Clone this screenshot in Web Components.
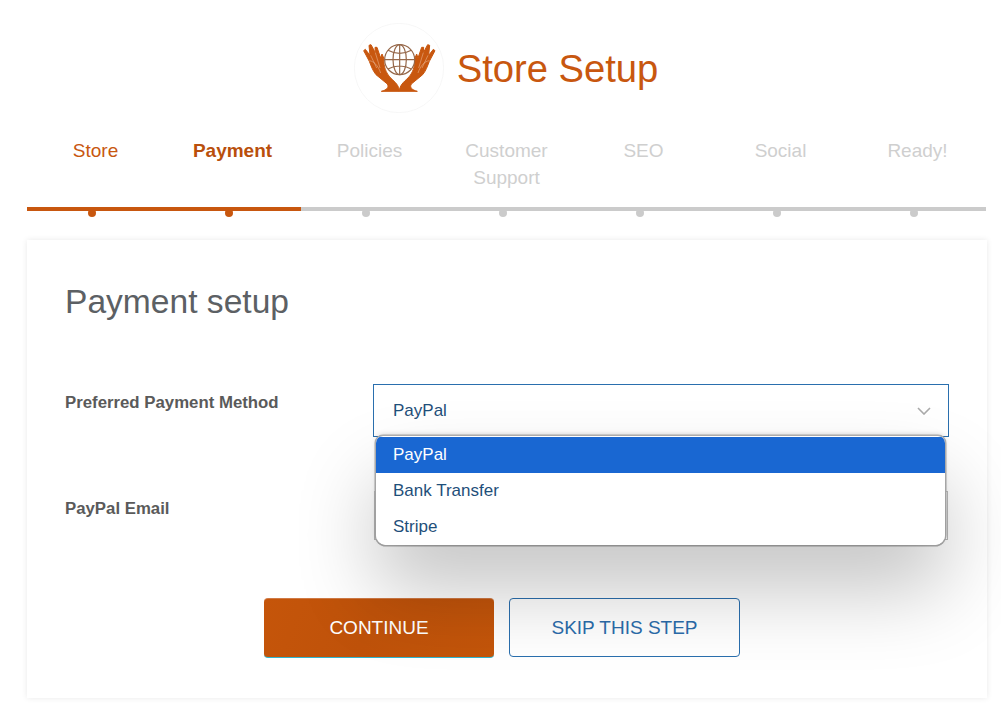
<!DOCTYPE html>
<html>
<head>
<meta charset="utf-8">
<title>Store Setup</title>
<style>
  html, body { margin: 0; padding: 0; background: #fff; }
  body { font-family: "Liberation Sans", Arial, sans-serif; }
</style>
</head>
<body>
<store-setup></store-setup>

<script>
class StoreLogo extends HTMLElement {
  constructor() {
    super();
    this.shadowDOM = this.attachShadow({mode: 'open'});
  }

  connectedCallback() {
    this.shadowDOM.innerHTML = `
    <style>
      :host { display: block; width: 90px; height: 90px; }
      svg { display: block; }
    </style>
    <svg width="90" height="90" viewBox="12 15 270 270" xmlns="http://www.w3.org/2000/svg">
      <circle cx="147" cy="150" r="134" fill="#fff" stroke="#f3f3f3" stroke-width="2"/>
      <defs>
        <g id="hand">
          <path fill="#c8570f" stroke="#c8570f" stroke-width="3" stroke-linejoin="round" d="M148 220 L94 220 C110 216 118 208 112 198 L78 170 C68 158 64 145 58 130 L41 98 L46 94 L60 112 L57 82 L63 80 L76 104 L75 88 L81 88 L92 120 L96 108 L102 122 C100 145 108 165 122 180 C136 193 147 202 148 220 Z"/>
          <path fill="none" stroke="#f0c9ac" stroke-width="1.4" d="M58 128 C72 130 84 142 92 165 M76 104 L90 150 M62 112 L80 150"/>
        </g>
      </defs>
      <use href="#hand"/>
      <use href="#hand" transform="translate(296 0) scale(-1 1)"/>
      <g fill="none" stroke="#96684a" stroke-width="3.6">
        <circle cx="149" cy="125" r="45"/>
        <ellipse cx="149" cy="125" rx="20" ry="45"/>
        <path d="M149 80 V170 M104 125 H194 M114 97 C135 109 163 109 184 97 M114 153 C135 141 163 141 184 153"/>
      </g>
    </svg>
    `;
  }
}

class SetupStep extends HTMLElement {
  constructor() {
    super();
    this.shadowDOM = this.attachShadow({mode: 'open'});
  }

  connectedCallback() {
    this.shadowDOM.innerHTML = `
    <style>
      :host {
        display: flex;
        flex-direction: column;
        justify-content: space-between;
        height: 74px;
        position: relative;
        color: #cfcfcf;
        --line: #cbcbcb;
      }
      :host([state="done"]) { color: #c8570f; --line: #c8570f; }
      :host([state="current"]) { color: #b94f0c; --line: #c8570f; font-weight: bold; }
      .name {
        font-size: 19px;
        line-height: 27px;
        text-align: center;
        padding: 0 20px;
      }
      .line { height: 4px; background: var(--line); }
      .dot {
        position: absolute;
        left: 61px;
        top: 72px;
        width: 8px;
        height: 8px;
        border-radius: 50%;
        background: var(--line);
      }
    </style>
    <div class="name"><slot></slot></div>
    <div class="line"></div>
    <div class="dot"></div>
    `;
  }
}

class PaymentSelect extends HTMLElement {
  constructor() {
    super();
    this.shadowDOM = this.attachShadow({mode: 'open'});
  }

  connectedCallback() {
    this.shadowDOM.innerHTML = `
    <style>
      :host { display: block; position: relative; color: #1f4f7a; font-size: 17px; }
      .box {
        box-sizing: border-box;
        height: 53px;
        border: 1px solid #2a6fae;
        display: flex;
        align-items: center;
        justify-content: space-between;
        padding: 0 17px 0 19px;
        background: #fff;
      }
      .menu {
        position: absolute;
        z-index: 2;
        left: 3px;
        right: 4px;
        top: 52px;
        background: #fff;
        border-radius: 7px 7px 10px 10px;
        overflow: hidden;
      }
      .shadow {
        position: absolute;
        z-index: 1;
        left: 3px;
        right: 4px;
        top: 52px;
        height: 109px;
        border-radius: 7px 7px 10px 10px;
        box-shadow: 0 45px 80px rgba(0, 0, 0, .23), 0 0 0 1.5px #b0b0b0, 0 -2px 5px rgba(0, 0, 0, .14);
      }
      .opt { height: 36px; line-height: 36px; padding-left: 17px; }
      .opt:first-child { margin-top: 1px; background: #1967d2; color: #fff; }
    </style>
    <div class="box">
      <span>PayPal</span>
      <svg width="14" height="8" viewBox="0 0 14 8"><path d="M1 1 L7 7 L13 1" fill="none" stroke="#aaa" stroke-width="1.6"/></svg>
    </div>
    <div class="shadow"></div>
    <div class="menu">
      <div class="opt">PayPal</div>
      <div class="opt">Bank Transfer</div>
      <div class="opt">Stripe</div>
    </div>
    `;
  }
}

class FormRow extends HTMLElement {
  constructor() {
    super();
    this.shadowDOM = this.attachShadow({mode: 'open'});
  }

  connectedCallback() {
    this.shadowDOM.innerHTML = `
    <style>
      :host { display: grid; grid-template-columns: 308px 576px; }
      .label {
        font-size: 16.8px;
        font-weight: bold;
        color: #5a5a5a;
        line-height: 18px;
        padding-top: 10px;
      }
    </style>
    <div class="label">${this.getAttribute('label')}</div>
    <div><slot></slot></div>
    `;
  }
}

class SetupButton extends HTMLElement {
  constructor() {
    super();
    this.shadowDOM = this.attachShadow({mode: 'open'});
  }

  connectedCallback() {
    this.shadowDOM.innerHTML = `
    <style>
      :host {
        display: flex;
        align-items: center;
        justify-content: center;
        box-sizing: border-box;
        width: 231px;
        height: 59px;
        border-radius: 4px;
        font-size: 19px;
        border: 1px solid #2a6fae;
        color: #2b6cab;
      }
      :host([primary]) {
        width: 230px;
        height: 60px;
        border: 0;
        border-top: 1px solid #d07a45;
        border-bottom: 1px solid #2fb6cf;
        color: #fff;
        background: linear-gradient(110deg, #c5550a 0%, #bf520a 45%, #c4550a 100%);
      }
    </style>
    <slot></slot>
    `;
  }
}

class StoreSetup extends HTMLElement {
  constructor() {
    super();
    this.shadowDOM = this.attachShadow({mode: 'open'});
  }

  connectedCallback() {
    this.shadowDOM.innerHTML = `
    <style>
      :host { display: block; font-family: "Liberation Sans", Arial, sans-serif; padding-bottom: 29px; }
      * { box-sizing: border-box; margin: 0; padding: 0; }
      header {
        display: flex;
        align-items: center;
        justify-content: center;
        gap: 13px;
        padding: 23px 0 0 0;
        height: 113px;
        margin-left: 11px;
      }
      h1 { font-size: 38.2px; font-weight: normal; color: #c8570f; line-height: 90px; padding-top: 1px; }
      .steps {
        display: grid;
        grid-template-columns: repeat(7, 137px);
        margin: 24px 0 0 27px;
        width: 959px;
      }
      .card {
        margin: 29px 0 0 27px;
        width: 960px;
        height: 458px;
        padding: 41px 38px 0;
        box-shadow: 0 0 6px rgba(0, 0, 0, .09);
      }
      h2 { font-size: 33.6px; font-weight: normal; color: #5c6064; line-height: 41px; }
      form-row { margin-top: 62px; }
      form-row + form-row { margin-top: 53px; }
      .field {
        height: 49px;
        border: 1px solid #bbb;
        margin: 1px 1px 4px;
      }
      .actions {
        display: flex;
        justify-content: center;
        gap: 15px;
        margin: 54px 10px 0 0;
      }
    </style>
    <header>
      <store-logo></store-logo>
      <h1>Store Setup</h1>
    </header>
    <nav class="steps">
      <setup-step state="done">Store</setup-step>
      <setup-step state="current">Payment</setup-step>
      <setup-step>Policies</setup-step>
      <setup-step>Customer Support</setup-step>
      <setup-step>SEO</setup-step>
      <setup-step>Social</setup-step>
      <setup-step>Ready!</setup-step>
    </nav>
    <section class="card">
      <h2>Payment setup</h2>
      <form-row label="Preferred Payment Method"><payment-select></payment-select></form-row>
      <form-row label="PayPal Email"><div class="field"></div></form-row>
      <div class="actions">
        <setup-button primary>CONTINUE</setup-button>
        <setup-button>SKIP THIS STEP</setup-button>
      </div>
    </section>
    `;
  }
}

customElements.define('store-logo', StoreLogo);
customElements.define('setup-step', SetupStep);
customElements.define('payment-select', PaymentSelect);
customElements.define('form-row', FormRow);
customElements.define('setup-button', SetupButton);
customElements.define('store-setup', StoreSetup);
</script>
</body>
</html>
